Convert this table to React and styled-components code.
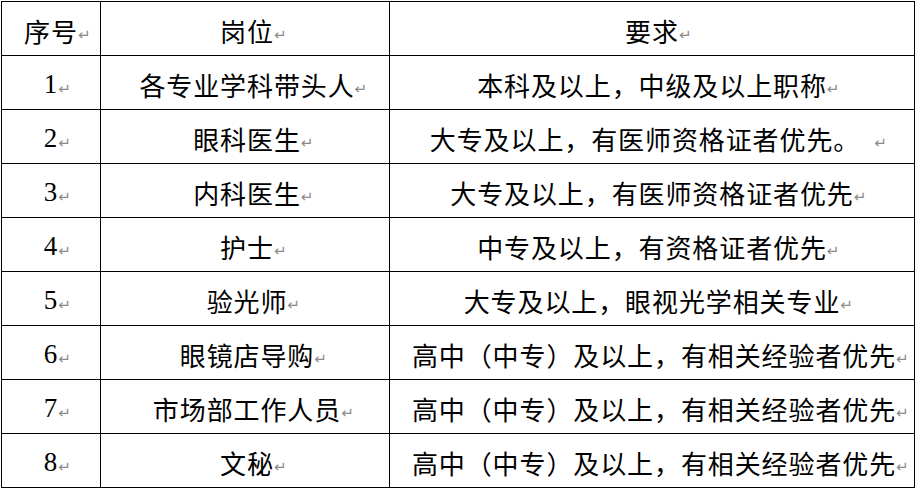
import styled, { createGlobalStyle } from "styled-components";

const rows = [
  ["1", "各专业学科带头人", "本科及以上，中级及以上职称"],
  ["2", "眼科医生", "大专及以上，有医师资格证者优先。"],
  ["3", "内科医生", "大专及以上，有医师资格证者优先"],
  ["4", "护士", "中专及以上，有资格证者优先"],
  ["5", "验光师", "大专及以上，眼视光学相关专业"],
  ["6", "眼镜店导购", "高中（中专）及以上，有相关经验者优先"],
  ["7", "市场部工作人员", "高中（中专）及以上，有相关经验者优先"],
  ["8", "文秘", "高中（中专）及以上，有相关经验者优先"],
];

export default function App() {
  return (
    <>
      <GlobalStyle />
      <Table>
        <Cell>
          序号<Mark>↵</Mark>
        </Cell>
        <Cell $shift={4}>
          岗位<Mark>↵</Mark>
        </Cell>
        <Cell>
          要求<Mark>↵</Mark>
        </Cell>
        {rows.map(([no, post, req]) => (
          <Row key={no} no={no} post={post} req={req} />
        ))}
      </Table>
    </>
  );
}

function Row({ no, post, req }) {
  return (
    <>
      <Cell>
        <Num>{no}</Num>
        <Mark>↵</Mark>
      </Cell>
      <Cell $shift={4}>
        {post}
        <Mark>↵</Mark>
      </Cell>
      <Cell $shift={req.length > 16 ? 4 : 0}>
        {req}
        <Mark $gap={req.endsWith("。")}>↵</Mark>
      </Cell>
    </>
  );
}

const GlobalStyle = createGlobalStyle`
  body {
    margin: 0;
    background: #ffffff;
  }
`;

const Table = styled.div`
  display: grid;
  grid-template-columns: 98px 288px 524px;
  grid-auto-rows: 53px;
  gap: 1px;
  padding: 1px;
  margin: 1px 0 0 1px;
  width: max-content;
  background: #000000;
`;

const Cell = styled.div`
  display: flex;
  align-items: center;
  justify-content: center;
  padding-left: ${(p) => p.$shift || 0}px;
  padding-top: 4px;
  background: #ffffff;
  color: #000000;
  font-family: "Liberation Serif", "Noto Sans CJK SC", serif;
  font-size: 26px;
  letter-spacing: 0.9px;
  white-space: nowrap;
`;

const Num = styled.span`
  font-size: 27px;
`;

const Mark = styled.span`
  display: inline-block;
  width: 13px;
  margin-right: -13px;
  margin-left: ${(p) => (p.$gap ? "14px" : "0")};
  align-self: flex-end;
  padding-bottom: 11px;
  font-family: "DejaVu Sans", sans-serif;
  font-size: 15px;
  letter-spacing: 0;
  color: #8a8a8a;
`;
